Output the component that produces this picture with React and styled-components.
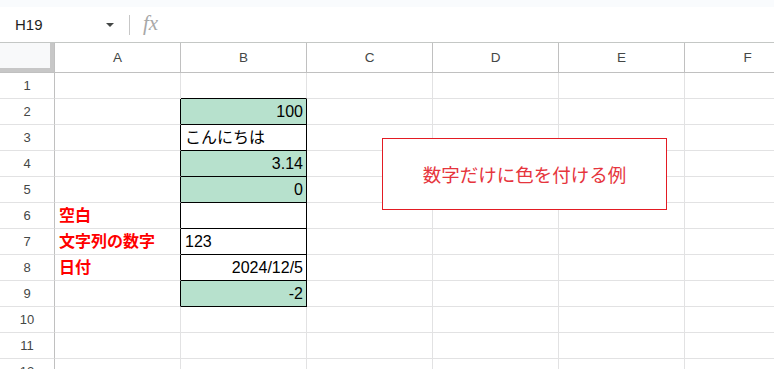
import React from "react";
import styled, { createGlobalStyle } from "styled-components";

const GlobalStyle = createGlobalStyle`
  html, body {
    margin: 0;
    padding: 0;
    background: #ffffff;
    overflow: hidden;
  }
  body {
    font-family: "Liberation Sans", "Noto Sans CJK JP", sans-serif;
  }
`;

const Page = styled.div`
  width: 774px;
  height: 369px;
  overflow: hidden;
  background: #ffffff;
`;

const TopStrip = styled.div`
  height: 7px;
  background: #f9fbfd;
`;

const FormulaBar = styled.div`
  height: 35px;
  display: flex;
  align-items: center;
  border-bottom: 1px solid #c4c7c5;
  background: #ffffff;
`;

const NameBox = styled.div`
  width: 114px;
  box-sizing: border-box;
  padding: 0 0 0 15px;
  display: flex;
  align-items: center;
  justify-content: space-between;
  font: 15px "Liberation Sans", Arial, sans-serif;
  color: #1f1f1f;
`;

const Caret = styled.span`
  width: 0;
  height: 0;
  border-left: 4.5px solid transparent;
  border-right: 4.5px solid transparent;
  border-top: 4.5px solid #444746;
  margin-top: 1px;
`;

const Divider = styled.div`
  width: 1px;
  height: 20px;
  margin-left: 15px;
  background: #c7c7c7;
`;

const Fx = styled.span`
  margin-left: 13px;
  font: italic 21px "Liberation Serif", serif;
  color: #a8a8a8;
  margin-top: -2px;
`;

const Sheet = styled.div`
  position: relative;
  display: grid;
  grid-template-columns: 55px repeat(6, 126px);
`;

const Corner = styled.div`
  box-sizing: border-box;
  height: 30px;
  background: #f8f9fa;
  border-right: 1px solid #c0c0c0;
  border-bottom: 1px solid #c0c0c0;
  box-shadow: inset -4px -4px 0 #c7c7c7;
`;

const ColHeader = styled.div`
  box-sizing: border-box;
  height: 30px;
  border-right: 1px solid #c0c0c0;
  border-bottom: 1px solid #c0c0c0;
  text-align: center;
  font: 13.5px/29px "Liberation Sans", Arial, sans-serif;
  color: #444746;
`;

const RowHeader = styled.div`
  box-sizing: border-box;
  height: 26px;
  border-right: 1px solid #c0c0c0;
  border-bottom: 1px solid #e2e2e3;
  text-align: center;
  font: 13px/26px "Liberation Sans", Arial, sans-serif;
  color: #444746;
`;

const Cell = styled.div`
  box-sizing: border-box;
  height: 26px;
  padding: 0 3px 0 4px;
  border-right: 1px solid ${(p) => (p.$edgeRight ? "#000000" : "#e2e2e3")};
  border-bottom: 1px solid ${(p) => (p.$edgeBottom ? "#000000" : "#e2e2e3")};
  background: ${(p) => (p.$fill ? "#b7e1cd" : "#ffffff")};
  text-align: ${(p) => p.$align || "left"};
  font-family: "Liberation Sans", "Noto Sans CJK JP", sans-serif;
  font-size: 16px;
  line-height: 25px;
  font-weight: ${(p) => (p.$label ? 700 : 400)};
  color: ${(p) => (p.$label ? "#ff0000" : "#000000")};
  white-space: nowrap;
`;

const Note = styled.div`
  position: absolute;
  left: 382px;
  top: 95px;
  width: 285px;
  height: 72px;
  box-sizing: border-box;
  border: 1px solid #e31b23;
  background: #ffffff;
  display: flex;
  align-items: center;
  justify-content: center;
  font: 18.5px "Noto Sans CJK JP", sans-serif;
  color: #e6353d;
`;

const columns = ["A", "B", "C", "D", "E", "F"];
const rowCount = 13;

const cells = {
  2: { B: { v: "100", align: "right", fill: true } },
  3: { B: { v: "こんにちは" } },
  4: { B: { v: "3.14", align: "right", fill: true } },
  5: { B: { v: "0", align: "right", fill: true } },
  6: { A: { v: "空白", label: true } },
  7: { A: { v: "文字列の数字", label: true }, B: { v: "123" } },
  8: { A: { v: "日付", label: true }, B: { v: "2024/12/5", align: "right" } },
  9: { B: { v: "-2", align: "right", fill: true } },
};

// B2:B9 is outlined with a solid black border
const inBox = (r) => r >= 2 && r <= 9;

export default function App() {
  const rows = Array.from({ length: rowCount }, (_, i) => i + 1);
  return (
    <Page>
      <GlobalStyle />
      <TopStrip />
      <FormulaBar>
        <NameBox>
          <span>H19</span>
          <Caret />
        </NameBox>
        <Divider />
        <Fx>fx</Fx>
      </FormulaBar>
      <Sheet>
        <Corner />
        {columns.map((c) => (
          <ColHeader key={c}>{c}</ColHeader>
        ))}
        {rows.map((r) => (
          <React.Fragment key={r}>
            <RowHeader>{r}</RowHeader>
            {columns.map((c) => {
              const d = (cells[r] && cells[r][c]) || {};
              const isB = c === "B";
              return (
                <Cell
                  key={c}
                  $align={d.align}
                  $fill={d.fill}
                  $label={d.label}
                  $edgeRight={(isB || c === "A") && inBox(r)}
                  $edgeBottom={isB && (inBox(r) || r === 1)}
                >
                  {d.v}
                </Cell>
              );
            })}
          </React.Fragment>
        ))}
        <Note>数字だけに色を付ける例</Note>
      </Sheet>
    </Page>
  );
}
